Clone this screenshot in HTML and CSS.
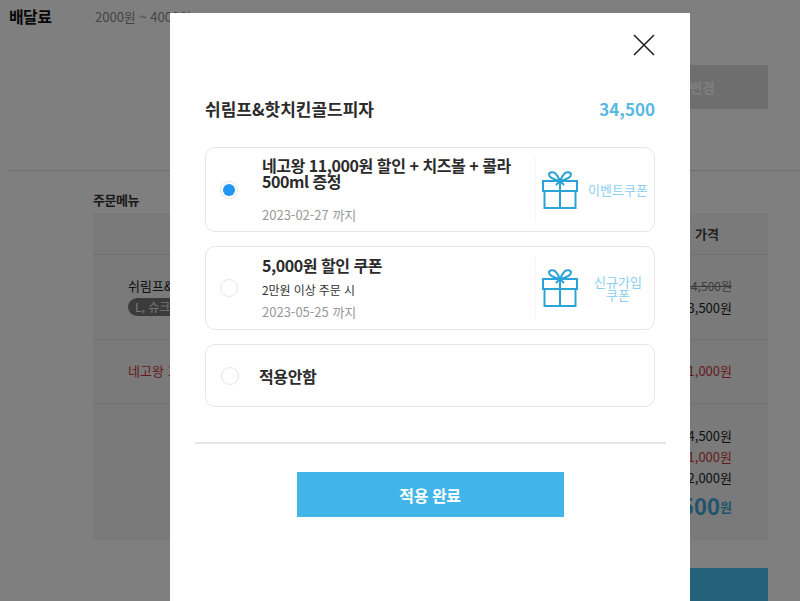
FILE: index.html
```html
<!DOCTYPE html>
<html lang="ko">
<head>
<meta charset="utf-8">
<title>쿠폰 적용</title>
<link rel="stylesheet" href="styles.css">
</head>
<body>
<div class="page">
  <section class="delivery">
    <strong class="delivery-label">배달료</strong>
    <span class="delivery-value">2000원 ~ 4000원</span>
  </section>
  <div class="change-row"><button class="change-btn">변경</button></div>
  <hr class="page-rule">
  <section class="order">
    <h2 class="order-title">주문메뉴</h2>
    <div class="order-table">
      <div class="row row-head"><span></span><span class="price-head">가격</span></div>
      <div class="row row-item">
        <div class="item-info">
          <div>쉬림프&amp;</div>
          <span class="pill">L, 슈크림</span>
        </div>
        <div class="prices"><s class="old">34,500원</s><span>33,500원</span></div>
      </div>
      <div class="row row-coupon">
        <div class="red item-name">네고왕 11,000원</div>
        <div class="prices red"><span>-11,000원</span></div>
      </div>
      <div class="row-total">
        <span>34,500원</span>
        <span class="red">-11,000원</span>
        <span>2,000원</span>
        <span class="grand"><b>25,500</b><i>원</i></span>
      </div>
    </div>
    <div class="pay-row"><div class="pay-btn"></div></div>
  </section>
</div>
<div class="overlay"></div>
<div class="modal">
  <div class="modal-top">
    <svg class="close" width="22" height="22" viewBox="0 0 22 22"><path d="M1 1 21 21M21 1 1 21" fill="none" stroke="#222" stroke-width="1.6"/></svg>
  </div>
  <div class="modal-body">
    <div class="product">
      <span class="product-name">쉬림프&amp;핫치킨골드피자</span>
      <span class="product-price">34,500</span>
    </div>
    <div class="card card-a">
      <span class="radio radio-on"></span>
      <div class="coupon-text">
        <div class="coupon-name">네고왕 11,000원 할인 + 치즈볼 + 콜라 500ml 증정</div>
        <div class="coupon-date">2023-02-27 까지</div>
      </div>
      <div class="coupon-side">
        <svg class="gift" width="36" height="38" viewBox="0 0 36 38"><g fill="none" stroke="#2ba3d8" stroke-width="2"><rect x="1" y="10" width="34" height="10"/><rect x="2.500" y="20" width="31" height="17"/><path d="M18 20V37M18 10C14 9 7 7 7 3.500 7 1 11 .5 13 2 15 4 17 7 18 10ZM18 10C22 9 29 7 29 3.500 29 1 25 .5 23 2 21 4 19 7 18 10ZM18 10 14 14M18 10 22 14M18 10V20"/></g></svg>
        <span class="coupon-type">이벤트쿠폰</span>
      </div>
    </div>
    <div class="card card-b">
      <span class="radio"></span>
      <div class="coupon-text">
        <div class="coupon-name">5,000원 할인 쿠폰</div>
        <div class="coupon-cond">2만원 이상 주문 시</div>
        <div class="coupon-date">2023-05-25 까지</div>
      </div>
      <div class="coupon-side">
        <svg class="gift" width="36" height="38" viewBox="0 0 36 38"><g fill="none" stroke="#2ba3d8" stroke-width="2"><rect x="1" y="10" width="34" height="10"/><rect x="2.500" y="20" width="31" height="17"/><path d="M18 20V37M18 10C14 9 7 7 7 3.500 7 1 11 .5 13 2 15 4 17 7 18 10ZM18 10C22 9 29 7 29 3.500 29 1 25 .5 23 2 21 4 19 7 18 10ZM18 10 14 14M18 10 22 14M18 10V20"/></g></svg>
        <span class="coupon-type">신규가입 쿠폰</span>
      </div>
    </div>
    <div class="card card-none">
      <span class="radio"></span>
      <span class="none-label">적용안함</span>
    </div>
  </div>
  <hr class="modal-rule">
  <div class="modal-foot"><button class="apply">적용 완료</button></div>
</div>
</body>
</html>
```
FILE: styles.css
```css
* { box-sizing: border-box; }
html, body { margin: 0; padding: 0; }
body {
  width: 800px;
  height: 601px;
  overflow: hidden;
  position: relative;
  background: #fff;
  font-family: "Noto Sans CJK KR", "Noto Sans", sans-serif;
  color: #222;
}
.page { height: 601px; overflow: hidden; padding-top: 6px; }
.delivery { display: flex; align-items: center; height: 20px; padding-left: 9px; }
.delivery-label { width: 86px; font-size: 16px; font-weight: 700; color: #111; letter-spacing: -.6px; }
.delivery-value { font-size: 13px; color: #888; }
.change-row { display: flex; justify-content: flex-end; padding: 39px 32px 0 0; }
.change-btn {
  width: 150px; height: 44px; border: 0; padding: 0 53px 0 0; background: #dcdcdc; text-align: right;
  color: #fff; font: 700 14px "Noto Sans CJK KR", sans-serif;
}
.page-rule { margin: 61px 0 0 9px; border: 0; border-top: 1px solid #ddd; }
.order { padding: 20px 32px 0 93px; }
.order-title { margin: 0; height: 22px; font-size: 13px; line-height: 18px; font-weight: 700; color: #333; letter-spacing: -.5px; }
.order-table { background: #f5f5f5; height: 327px; font-size: 13px; }
.row { display: flex; justify-content: space-between; align-items: center; border-bottom: 1px solid #e2e2e2; padding: 0 36px 0 35px; }
.row-head { height: 42px; padding-right: 49px; }
.price-head { font-weight: 700; color: #444; }
.row-item { height: 85px; }
.row-coupon { height: 64px; padding-bottom: 2px; }
.item-info div { line-height: 18px; margin-top: -1px; }
.item-name { line-height: 18px; }
.pill {
  display: inline-block; height: 18px; margin-top: 3px; padding: 0 10px 0 7px;
  border-radius: 9px; background: #777; color: #eee; font-size: 12px; line-height: 18px;
}
.prices { display: flex; flex-direction: column; align-items: flex-end; gap: 4px; line-height: 18px; }
.old { font-size: 12px; color: #777; }
.red { color: #c8373c; }
.row-total {
  display: flex; flex-direction: column; align-items: flex-end;
  padding: 21px 36px 0 0; line-height: 21px;
}
.grand { display: flex; align-items: flex-end; color: #41a9d8; margin-top: 1px; line-height: 32px; }
.grand b { font-size: 22px; }
.grand i { font-style: normal; font-size: 13px; font-weight: 700; line-height: 29px; }
.pay-row { display: flex; justify-content: flex-end; padding-top: 28px; }
.pay-btn { width: 340px; height: 50px; background: #48c3f7; }

.overlay { position: absolute; inset: 0; background: rgba(0, 0, 0, .5); }
.modal { position: absolute; left: 170px; top: 13px; width: 520px; height: 600px; background: #fff; }
.modal-top { display: flex; justify-content: flex-end; height: 41px; padding: 21px 35px 0 0; }
.close { display: block; flex: none; }
.modal-body { padding: 39px 35px 0; }
.product { display: flex; justify-content: space-between; align-items: center; height: 30px; margin-bottom: 24px; }
.product-name { font-size: 17px; font-weight: 700; color: #2b2b2b; }
.product-price { font-size: 17px; font-weight: 700; color: #58b8e2; }
.card {
  display: flex; align-items: center; width: 450px; border: 1px solid #e6e6e6; border-radius: 10px;
  margin-bottom: 14px; padding-left: 14px;
}
.card-a { height: 85px; }
.card-b { height: 84px; }
.card-none { height: 63px; padding-left: 15px; margin-bottom: 0; }
.radio {
  flex: none; position: relative; width: 18px; height: 18px; border-radius: 50%;
  border: 1px solid #e6e6e6; background: #fff;
}
.radio-on::after {
  content: ""; position: absolute; left: 2px; top: 2px; width: 12px; height: 12px;
  border-radius: 50%; background: #2196f3;
}
.coupon-text { width: 274px; margin-left: 24px; display: flex; flex-direction: column; height: 100%; }
.coupon-name { font-size: 16px; line-height: 16px; font-weight: 700; color: #2b2b2b; letter-spacing: -.45px; }
.card-a .coupon-name { margin-top: 9px; }
.card-b .coupon-name { margin-top: 10px; }
.coupon-cond { margin-top: 9px; font-size: 12px; line-height: 16px; color: #333; letter-spacing: -.1px; }
.coupon-date { font-size: 13px; line-height: 16px; color: #999; }
.card-a .coupon-date { margin-top: 18px; }
.card-b .coupon-date { margin-top: 6px; }
.coupon-side {
  flex: none; display: flex; align-items: center; width: 119px; height: 62px; padding-left: 6px;
  border-left: 1px dotted #eee;
}
.gift { flex: none; }
.coupon-type { flex: 1; padding-left: 4px; text-align: center; font-size: 13px; line-height: 13px; color: #8ccfee; word-break: keep-all; }
.none-label { margin-left: 20px; font-size: 16px; font-weight: 700; color: #2b2b2b; letter-spacing: -.4px; }
.modal-rule { margin: 35px 24px 0 25px; border: 0; border-top: 2px solid #e5e5e5; }
.modal-foot { display: flex; justify-content: center; padding-top: 28px; }
.apply {
  width: 267px; height: 45px; border: 0; background: #41b5e8; color: #fff;
  font: 700 16px "Noto Sans CJK KR", sans-serif; letter-spacing: -.4px;
}
```
